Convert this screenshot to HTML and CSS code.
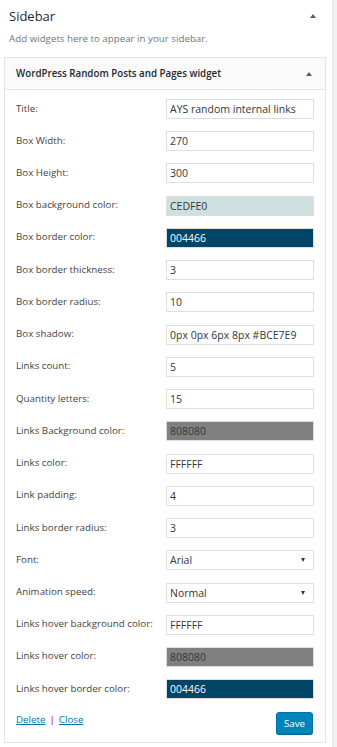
FILE: index.html
```html
<!DOCTYPE html>
<html>
<head>
<meta charset="utf-8">
<link rel="stylesheet" href="styles.css">
</head>
<body>
<div class="sidebar">
  <div class="sb-head">
    <h2 class="sb-title">Sidebar</h2>
    <span class="arrow"></span>
  </div>
  <p class="sb-desc">Add widgets here to appear in your sidebar.</p>
  <div class="widget">
    <div class="w-top">
      <h3 class="w-title">WordPress Random Posts and Pages widget</h3>
      <span class="arrow"></span>
    </div>
    <div class="w-inside">
      <div class="form">
        <label class="lbl">Title:</label><input class="inp" value="AYS random internal links">
        <label class="lbl">Box Width:</label><input class="inp" value="270">
        <label class="lbl">Box Height:</label><input class="inp" value="300">
        <label class="lbl">Box background color:</label><input class="inp c-cedfe0" value="CEDFE0">
        <label class="lbl">Box border color:</label><input class="inp c-004466" value="004466">
        <label class="lbl">Box border thickness:</label><input class="inp" value="3">
        <label class="lbl">Box border radius:</label><input class="inp" value="10">
        <label class="lbl">Box shadow:</label><input class="inp" value="0px 0px 6px 8px #BCE7E9">
        <label class="lbl">Links count:</label><input class="inp" value="5">
        <label class="lbl">Quantity letters:</label><input class="inp" value="15">
        <label class="lbl">Links Background color:</label><input class="inp c-808080" value="808080">
        <label class="lbl">Links color:</label><input class="inp" value="FFFFFF">
        <label class="lbl">Link padding:</label><input class="inp" value="4">
        <label class="lbl">Links border radius:</label><input class="inp" value="3">
        <label class="lbl">Font:</label>
        <span class="sel-wrap"><select class="sel"><option>Arial</option></select><span class="sel-arrow"></span></span>
        <label class="lbl">Animation speed:</label>
        <span class="sel-wrap"><select class="sel"><option>Normal</option></select><span class="sel-arrow"></span></span>
        <label class="lbl">Links hover background color:</label><input class="inp" value="FFFFFF">
        <label class="lbl">Links hover color:</label><input class="inp c-808080" value="808080">
        <label class="lbl">Links hover border color:</label><input class="inp c-004466" value="004466">
      </div>
      <div class="w-control">
        <div class="w-links"><a href="#" class="lnk">Delete</a><span class="sep">|</span><a href="#" class="lnk">Close</a></div>
        <button class="save">Save</button>
      </div>
    </div>
  </div>
</div>
</body>
</html>
```

FILE: styles.css
```css
* { box-sizing: border-box; }
html, body { margin: 0; padding: 0; }
body {
  background: #f1f1f1;
  font-family: "Open Sans", "Liberation Sans", sans-serif;
  color: #444;
  width: 337px;
  height: 747px;
  overflow: hidden;
}
.sidebar {
  width: 333px;
  height: 747px;
  background: #fff;
  border-right: 1px solid #e5e5e5;
  padding: 0 6px 0 4px;
}
.sb-head {
  display: flex;
  align-items: center;
  justify-content: space-between;
  height: 30px;
  padding: 2px 10px 0 5px;
}
.sb-title {
  margin: 0;
  font-size: 13px;
  font-weight: 400;
  color: #23282d;
}
.arrow {
  width: 0;
  height: 0;
  border-left: 3.5px solid transparent;
  border-right: 3.5px solid transparent;
  border-bottom: 4px solid #555d66;
}
.sb-desc {
  margin: 0;
  padding: 0 0 0 5px;
  height: 27px;
  line-height: 18px;
  font-size: 9.75px;
  color: #72777c;
}
.widget {
  border: 1px solid #e5e5e5;
  background: #fff;
}
.w-top {
  display: flex;
  align-items: center;
  justify-content: space-between;
  height: 32px;
  background: #fafafa;
  border-bottom: 1px solid #e5e5e5;
  padding: 0 13px 0 11px;
}
.w-title {
  margin: 0;
  font-size: 9.75px;
  font-weight: 600;
  color: #23282d;
}
.w-inside {
  padding: 9px 12px 8px 11px;
}
.form {
  display: grid;
  grid-template-columns: 150px 148px;
  row-gap: 12.24px;
  align-items: center;
}
.lbl {
  font-size: 9.75px;
  color: #444;
  line-height: 14px;
  margin-top: -1px;
}
.inp, .sel {
  width: 148px;
  height: 20px;
  margin: 0;
  border: 1.5px solid #ddd;
  background: #fff;
  color: #32373c;
  font-family: "Open Sans", "Liberation Sans", sans-serif;
  font-size: 10.5px;
  padding: 0 3px;
  outline: none;
  border-radius: 0;
}
.c-cedfe0 { background: #cedfe0; }
.c-004466 { background: #004466; color: #fff; }
.c-808080 { background: #808080; }
.sel-wrap {
  position: relative;
  display: block;
  width: 148px;
  height: 20px;
}
.sel {
  appearance: none;
  -webkit-appearance: none;
  display: block;
}
.sel-arrow {
  position: absolute;
  right: 9px;
  top: 8px;
  width: 0;
  height: 0;
  border-left: 2.5px solid transparent;
  border-right: 2.5px solid transparent;
  border-top: 4px solid #32373c;
}
.w-control {
  display: flex;
  justify-content: space-between;
  align-items: flex-start;
  margin-top: 13px;
}
.w-links {
  font-size: 9.75px;
  padding-top: 1px;
}
.lnk {
  color: #0073aa;
  text-decoration: underline;
}
.sep {
  color: #a00;
  margin: 0 4px;
}
.save {
  width: 37px;
  height: 22px;
  padding: 0;
  margin-right: 0;
  background: #0085ba;
  border: 1px solid #0073aa;
  border-radius: 3px;
  box-shadow: 0 1px 0 #006799;
  color: #fff;
  font-family: "Open Sans", "Liberation Sans", sans-serif;
  font-size: 9.75px;
}
```
